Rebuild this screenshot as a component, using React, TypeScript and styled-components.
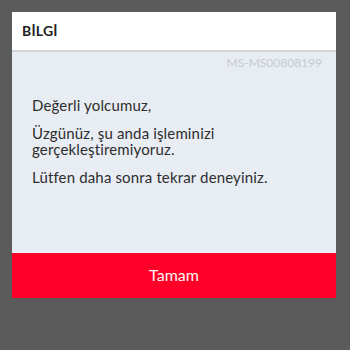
import React from "react";
import styled, { createGlobalStyle } from "styled-components";

const Global = createGlobalStyle`
  html, body { margin: 0; padding: 0; background: #5b5b5b; }
  body { font-family: Lato, "Open Sans", sans-serif; }
  * { box-sizing: border-box; }
`;

const Page = styled.div`
  width: 350px;
  height: 350px;
  padding: 12px 14px 0 12px;
  background: #5b5b5b;
`;

const Dialog = styled.div`
  display: flex;
  flex-direction: column;
  width: 324px;
`;

const Header = styled.div`
  height: 40px;
  background: #ffffff;
  border-bottom: 2px solid #d2d5da;
  display: flex;
  align-items: center;
  padding: 0 10px 2px;
  font-weight: 700;
  font-size: 14px;
  color: #222;
  letter-spacing: 0.2px;
`;

const Body = styled.div`
  background: #e8ecf3;
  height: 201px;
  padding: 4px 14px 0 20px;
  display: flex;
  flex-direction: column;
`;

const Code = styled.div`
  align-self: flex-end;
  font-size: 12px;
  color: #c6cbd4;
  line-height: 14px;
`;

const Paragraph = styled.p<{ $first?: boolean }>`
  margin: ${(p) => (p.$first ? "27px" : "12px")} 0 0;
  font-size: 15px;
  letter-spacing: 0.15px;
  line-height: 16px;
  color: #2e2e2e;
  max-width: 260px;
`;

const Button = styled.button`
  height: 45px;
  border: none;
  background: #ff0029;
  color: #fff3f5;
  font-family: inherit;
  font-size: 16px;
  padding: 0 0 2px;
  cursor: pointer;
`;

export default function App() {
  return (
    <>
      <Global />
      <Page>
        <Dialog>
          <Header>BİLGİ</Header>
          <Body>
            <Code>MS-MS00808199</Code>
            <Paragraph $first>Değerli yolcumuz,</Paragraph>
            <Paragraph>Üzgünüz, şu anda işleminizi gerçekleştiremiyoruz.</Paragraph>
            <Paragraph>Lütfen daha sonra tekrar deneyiniz.</Paragraph>
          </Body>
          <Button>Tamam</Button>
        </Dialog>
      </Page>
    </>
  );
}
